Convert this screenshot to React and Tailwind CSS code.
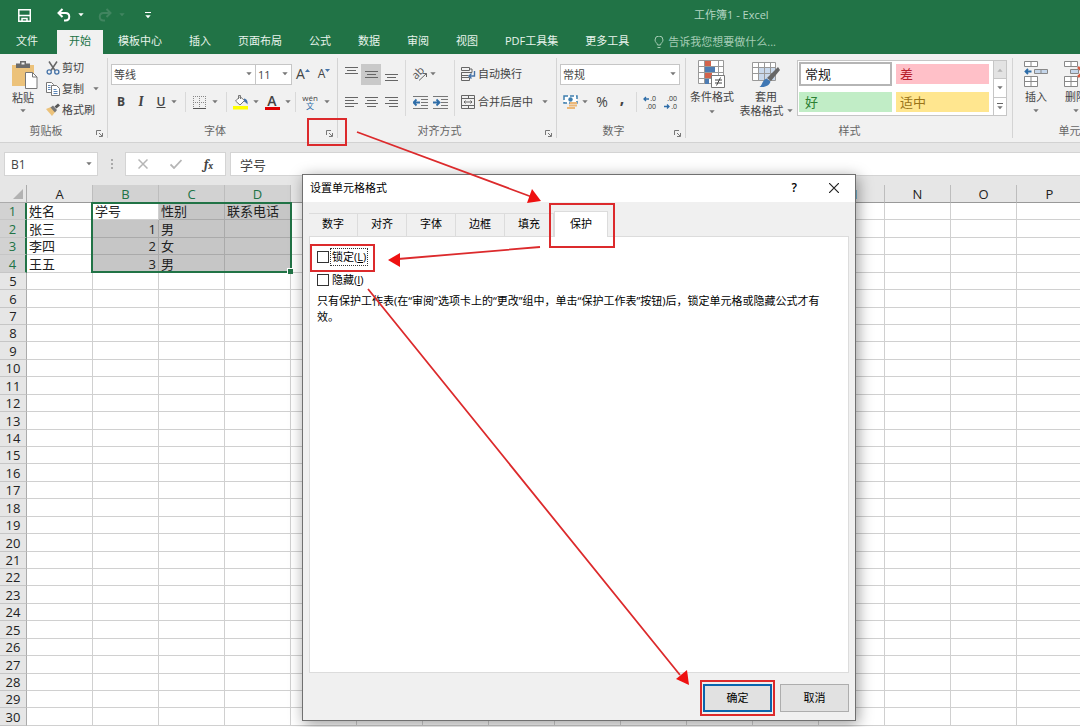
import { useState } from 'react'

const tabs = ['模板中心', '插入', '页面布局', '公式', '数据', '审阅', '视图', 'PDF工具集', '更多工具']
const columns = 'ABCDEFGHIJKLMNOPQRSTUVWXYZ'.split('')
const rowCount = 30

const data = [
  ['姓名', '学号', '性别', '联系电话'],
  ['张三', 1, '男', ''],
  ['李四', 2, '女', ''],
  ['王五', 3, '男', ''],
]

const isSelected = (row, col) => row < 4 && col >= 1 && col <= 3

/* Small shared pieces */

function Caret({ className = 'text-[#777]' }) {
  return (
    <svg className={`w-[6px] h-[4px] shrink-0 ${className}`} viewBox="0 0 6 4" fill="currentColor" aria-hidden="true">
      <path d="M.3 .3h5.400L3 3.300z" />
    </svg>
  )
}

function Launcher() {
  return (
    <button aria-label="更多设置" className="absolute right-[5px] bottom-[5px] text-[#777]">
      <svg className="w-[7px] h-[7px]" viewBox="0 0 7 7" fill="none" stroke="currentColor">
        <path d="M.5 5V.5H5" />
        <path d="M3 3l3 3" />
        <path d="M6.5 3v3.5H3" />
      </svg>
    </button>
  )
}

function Group({ label, launcher, className = '', children }) {
  return (
    <section className={`relative shrink-0 flex flex-col ${className}`}>
      <div className="h-[66px]">{children}</div>
      <div className={`h-[22px] flex items-center justify-center text-[#666] ${launcher ? 'pr-4' : ''}`}>{label}</div>
      {launcher && <Launcher />}
      <div className="absolute right-0 top-1 bottom-1 w-px bg-[#d4d4d4]" />
    </section>
  )
}

function Divider() {
  return <div className="w-px h-5 shrink-0 bg-[#d9d9d9]" />
}

function SelectBox({ label, value, className = '' }) {
  return (
    <div className={`relative h-[21px] shrink-0 ${className}`}>
      <select aria-label={label} className="w-full h-full appearance-none border border-[#c6c6c6] bg-white pl-[2px] leading-none text-[#444]">
        <option>{value}</option>
      </select>
      <div className="absolute right-[4px] top-2 pointer-events-none">
        <Caret />
      </div>
    </div>
  )
}

function Tool({ label, className = 'w-5', children }) {
  return (
    <button aria-label={label} className={`h-[21px] shrink-0 flex items-center justify-center ${className}`}>
      {children}
    </button>
  )
}

function Lines({ d }) {
  return (
    <svg className="w-[14px] h-[14px]" viewBox="0 0 14 14" stroke="#666" fill="none">
      <path d={d} />
    </svg>
  )
}

/* Ribbon icons */

function PasteIcon() {
  return (
    <svg className="ml-[3px] w-[27px] h-[28px]" viewBox="0 0 27 28">
      <path d="M1 4h22v21H1z" fill="#ecc27a" />
      <path d="M5 2.5h4V0h6v2.5h4V7H5z" fill="#6b6b6b" />
      <path d="M10.5 1.5h3v2h-3z" fill="#f0f0f0" />
      <path d="M14.5 11.5h7l4.500 4.500v11.500h-11.500z" fill="#fff" stroke="#777" />
      <path d="M21.500 11.500v4.500h4.500" fill="none" stroke="#777" />
    </svg>
  )
}

function ScissorsIcon() {
  return (
    <svg className="w-[14px] h-[14px]" viewBox="0 0 14 14" fill="none">
      <path d="M3 .5l6 9M11 .5l-6 9" stroke="#666" strokeWidth="1.500" />
      <circle cx="3.200" cy="11" r="2.100" stroke="#4472a8" strokeWidth="1.300" />
      <circle cx="10.800" cy="11" r="2.100" stroke="#4472a8" strokeWidth="1.300" />
    </svg>
  )
}

function CopyIcon() {
  return (
    <svg className="w-[14px] h-[14px]" viewBox="0 0 14 14" fill="#fff" stroke="#777">
      <path d="M.5 .5h5l2 2v8h-7z" />
      <path d="M5.500 3.500h5l3 3v7h-8z" />
      <path d="M2 3.500h2.500M2 5.500h2.500M2 7.500h2.500M7.500 7.500h3M7.500 9.500h4M7.500 11.500h4" stroke="#5b86b8" />
    </svg>
  )
}

function BrushIcon() {
  return (
    <svg className="w-[14px] h-[14px]" viewBox="0 0 14 14">
      <path d="M0 6l5-2 4.500 4.500L6 13z" fill="#ecc27a" />
      <path d="M4.500 4.500L7 2.500l4 4.500-2 2.500z" fill="#777" />
      <path d="M8.500 3.500L12 .5l2 2-3.500 3z" fill="#555" />
    </svg>
  )
}

function FillIcon() {
  return (
    <svg className="w-[17px] h-[16px]" viewBox="0 0 17 16">
      <path d="M3.500 7L8 2.500l4.500 4L8 11z" fill="#fff" stroke="#777" />
      <path d="M6.500 5V1.500h2V5" fill="none" stroke="#777" />
      <path d="M12 4.500c3 .5 4 3 3.500 6-1-1.500-2-2.500-3.500-3z" fill="#4472a8" />
      <path d="M1 12h15v3.500H1z" fill="#ffff00" />
    </svg>
  )
}

function BordersIcon() {
  return (
    <svg className="w-[13px] h-[13px]" viewBox="0 0 13 13" fill="none">
      <path d="M.5 0v12M6.500 0v12M12.500 0v12M0 .5h13M0 6.500h13" stroke="#888" strokeDasharray="1 1" />
      <path d="M0 12.500h13" stroke="#555" />
    </svg>
  )
}

function OrientationIcon() {
  return (
    <svg className="w-[16px] h-[16px] overflow-visible" viewBox="0 0 16 16">
      <text x="1" y="11" fontSize="11" fill="#555" transform="rotate(-45 6 9)">ab</text>
      <path d="M7 14.500l7.500-7M11 7.500h3.500v3.500" fill="none" stroke="#666" />
    </svg>
  )
}

function IndentIcon({ right }) {
  return (
    <svg className="w-[15px] h-[13px]" viewBox="0 0 15 13" fill="none">
      <path d="M0 .5h15M8 3.500h7M8 6.500h7M8 9.500h7M0 12.500h15" stroke="#777" />
      <path d={right ? 'M0 6.500h6M3.500 3.500l3 3-3 3' : 'M1 6.500h6M3.500 3.500l-3 3 3 3'} stroke="#2e6da8" strokeWidth="1.800" />
    </svg>
  )
}

function WrapIcon() {
  return (
    <svg className="w-[15px] h-[15px]" viewBox="0 0 15 15" fill="none" stroke="#666">
      <path d="M.5 .5h8v3h-8zM8.500 2h2.500v3.500H.5v3h7M.5 5.500v8M.5 10.500h8v3h-8" />
      <path d="M13.500 4v5h-5M10.500 6.500L8 9l2.500 2.500" stroke="#4472a8" strokeWidth="1.400" />
    </svg>
  )
}

function MergeIcon() {
  return (
    <svg className="w-[14px] h-[14px]" viewBox="0 0 14 14" fill="none" stroke="#666">
      <path d="M.5 .5h13v13H.5zM.5 3.500h13M.5 10.500h13M7.500 .5v3M7.500 10.500v3" />
      <path d="M3 7h8M4.500 5.500L3 7l1.500 1.500M9.500 5.500L11 7 9.500 8.500" />
    </svg>
  )
}

function CurrencyIcon() {
  return (
    <svg className="w-[16px] h-[15px]" viewBox="0 0 16 15">
      <path d="M1 1h13v7H1z" fill="#fff" stroke="#3f7fae" strokeWidth="1.500" strokeDasharray="4 2" />
      <circle cx="7.500" cy="4.500" r="2.200" fill="#3f7fae" />
      <path d="M7 7h7v2H7zM6 9.500h8v2H6zM4 12h8v2H4z" fill="#ecb878" />
    </svg>
  )
}

function DecimalIcon({ top, bottom, arrowTop }) {
  return (
    <svg className="w-[15px] h-[15px] overflow-visible" viewBox="0 0 15 15">
      <text x="14" y="6" fontSize="7" textAnchor="end" fill="#333">{top}</text>
      <text x="14" y="14" fontSize="7" textAnchor="end" fill="#333">{bottom}</text>
      <path
        d={arrowTop ? 'M7 4H2M4 2L2 4l2 2' : 'M1 11.500h5M4 9.500l2 2-2 2'}
        fill="none"
        stroke="#2e6da8"
        strokeWidth="1.300"
      />
    </svg>
  )
}

function ConditionalIcon() {
  return (
    <svg className="w-[28px] h-[28px]" viewBox="0 0 28 28">
      <path d="M.5 .5h25v23H.5z" fill="#fff" stroke="#999" />
      <path d="M6.500 0v24M20.500 0v24M0 6.500h26M0 12.500h26M0 18.500h26" stroke="#999" />
      <path d="M7 1h6v5H7zM7 13h7v5H7z" fill="#d4634b" />
      <path d="M7 7h10v5H7zM7 19h4v5H7z" fill="#4d7cb3" />
      <path d="M13.500 15.500h13v12h-13z" fill="#fff" stroke="#777" />
      <path d="M17 20h7M17 23h7M22.500 17.500l-4 8" stroke="#444" fill="none" />
    </svg>
  )
}

function TableFormatIcon() {
  return (
    <svg className="w-[28px] h-[28px]" viewBox="0 0 28 28">
      <path d="M.5 2.500h23v18H.5z" fill="#fff" stroke="#999" />
      <path d="M6 8h17v12H6z" fill="#c9d9ec" />
      <path d="M6.500 2v19M12.500 2v19M18.500 2v19M0 7.500h24M0 13.500h24" stroke="#999" />
      <path d="M26 7l2 3-9 11-4-3z" fill="#666" />
      <path d="M14.500 18.500l4 3c-1 4-5 6-11 5.500 3-1.500 2.500-7 7-8.500z" fill="#4078b4" />
    </svg>
  )
}

function CellsIcon({ remove }) {
  return (
    <svg className="w-[26px] h-[26px]" viewBox="0 0 26 26" fill="#fff" stroke="#888">
      <path d="M1.500 .5h13v5h-13zM8 .5v5M1.500 15.500h13v10h-13zM8 15.500v10M1.500 20.500h13" />
      {remove ? (
        <>
          <path d="M7.500 8.500h8v4h-8z" fill="#c5d6ea" />
          <path d="M15 6l10 10M25 6L15 16" stroke="#d4583e" strokeWidth="2.500" />
        </>
      ) : (
        <>
          <path d="M11.500 8.500h13v4h-13zM18 8.500v4" fill="#c5d6ea" />
          <path d="M8.500 10.500h-6M5 8l-2.500 2.500L5 13" stroke="#2e6da8" strokeWidth="1.800" fill="none" />
        </>
      )}
    </svg>
  )
}

function TitleBar() {
  return (
    <header className="bg-[#217346] text-[#e8f3ec]">
      <div className="relative h-[30px] flex items-center">
        <div className="flex items-center pl-[18px]">
          <button aria-label="保存">
            <svg className="w-[13px] h-[13px]" viewBox="0 0 13 13" fill="none" stroke="#fff" strokeWidth="1.500">
              <path d="M.8 .8h11.500v11.500H.8zM1 6.500h11" />
              <path d="M4 12V9.500h5V12" />
            </svg>
          </button>
          <button aria-label="撤消" className="ml-[26px]">
            <svg className="w-[14px] h-[14px]" viewBox="0 0 14 14" fill="none" stroke="#fff" strokeWidth="2">
              <path d="M5.500 1L1.500 5l4 4M2 5h6.500c5 0 5 7.500 0 7.500H7" />
            </svg>
          </button>
          <div className="ml-[7px]"><Caret className="text-white" /></div>
          <button aria-label="恢复" className="ml-[14px]">
            <svg className="w-[14px] h-[14px]" viewBox="0 0 14 14" fill="none" stroke="#418560" strokeWidth="2">
              <path d="M8.500 1l4 4-4 4M12 5H5.500c-5 0-5 7.500 0 7.500H7" />
            </svg>
          </button>
          <div className="ml-[7px]"><Caret className="text-[#418560]" /></div>
          <button aria-label="自定义快速访问工具栏" className="ml-5 flex flex-col items-center gap-[2px]">
            <div className="w-[6px] h-px bg-white" />
            <Caret className="text-white" />
          </button>
        </div>
        <div className="absolute left-[694px] text-[#b5d6c3]">工作簿1 - Excel</div>
      </div>
      <nav className="flex h-6 items-stretch gap-[3px] leading-[22px]">
        <button className="w-[54px] shrink-0 pb-[2px]">文件</button>
        <button className="bg-[#f1f1f1] px-3 pb-[2px] text-[#217346] shrink-0">开始</button>
        {tabs.map((tab) => (
          <button key={tab} className="px-3 pb-[2px] shrink-0">{tab}</button>
        ))}
        <button className="flex items-center gap-1 pl-[10px] text-[#a5ccb5] shrink-0">
          <svg className="w-[10px] h-[12px]" viewBox="0 0 10 12" fill="none" stroke="currentColor">
            <path d="M3.500 9C3.500 7 1 6.500 1 4a4 4 0 018 0c0 2.500-2.500 3-2.500 5zM3.500 11.500h3" />
          </svg>
          告诉我您想要做什么...
        </button>
      </nav>
    </header>
  )
}

function Ribbon() {
  return (
    <div className="flex overflow-hidden border-b border-[#d2d2d2] bg-[#f1f1f1] text-[#444]">
      <Group label="剪贴板" launcher className="w-[108px]">
        <div className="flex">
          <button className="w-[46px] shrink-0 pt-[7px] flex flex-col items-center">
            <PasteIcon />
            <span className="h-[18px] leading-[18px]">粘贴</span>
            <span className="pt-[2px]"><Caret /></span>
          </button>
          <div className="pt-[3px]">
            {[
              ['剪切', <ScissorsIcon />],
              ['复制', <CopyIcon />],
              ['格式刷', <BrushIcon />],
            ].map(([name, icon]) => (
              <button key={name} className="flex h-[21px] items-center gap-[2px] whitespace-nowrap">
                {icon}
                {name}
                {name === '复制' && <span className="pl-[7px]"><Caret /></span>}
              </button>
            ))}
          </div>
        </div>
      </Group>

      <Group label="字体" launcher className="w-[230px]">
        <div className="pt-[6px] pl-[3px]">
          <div className="flex h-7 items-center">
            <SelectBox label="字体" value="等线" className="w-[145px]" />
            <SelectBox label="字号" value="11" className="w-[37px] -ml-px" />
            <Tool label="增大字号" className="w-[22px]">
              <span className="text-sm">A</span>
              <svg className="w-[5px] h-[10px]" viewBox="0 0 5 10" fill="#4472a8"><path d="M0 3h5L2.500 0z" /></svg>
            </Tool>
            <Tool label="减小字号" className="w-5">
              <span className="text-xs">A</span>
              <svg className="w-[5px] h-[10px]" viewBox="0 0 5 10" fill="#4472a8"><path d="M0 0h5L2.500 3z" /></svg>
            </Tool>
          </div>
          <div className="flex h-7 items-center">
            <Tool label="加粗"><b className="text-xs">B</b></Tool>
            <Tool label="倾斜"><i className="font-serif text-sm font-semibold">I</i></Tool>
            <Tool label="下划线"><span className="text-xs font-semibold underline">U</span></Tool>
            <Caret />
            <div className="w-2" />
            <Divider />
            <Tool label="边框" className="w-[26px]"><BordersIcon /></Tool>
            <Caret />
            <div className="w-2" />
            <Divider />
            <Tool label="填充颜色" className="w-[26px]"><FillIcon /></Tool>
            <Caret />
            <Tool label="字体颜色" className="w-[26px]">
              <span className="flex flex-col items-center">
                <span className="text-sm leading-3 font-semibold">A</span>
                <span className="w-[15px] h-[3px] bg-[#e00000]" />
              </span>
            </Tool>
            <Caret />
            <div className="w-1" />
            <Divider />
            <Tool label="拼音" className="w-[28px]">
              <span className="flex flex-col items-center">
                <span className="text-[8px] leading-2">wén</span>
                <span className="text-[8px] leading-2 text-[#2e6da8]">文</span>
              </span>
            </Tool>
            <Caret />
          </div>
        </div>
      </Group>

      <Group label="对齐方式" launcher className="w-[219px]">
        <div className="flex pt-[6px] pl-[3px]">
          <div>
            <div className="flex h-7 items-center">
              <Tool label="顶端对齐"><Lines d="M1 .5h13M3 3.500h9M1 6.500h13" /></Tool>
              <Tool label="垂直居中" className="w-5 bg-[#c9c9c9]"><Lines d="M1 4.500h13M3 7.500h9M1 10.500h13" /></Tool>
              <Tool label="底端对齐"><Lines d="M1 7.500h13M3 10.500h9M1 13.500h13" /></Tool>
            </div>
            <div className="flex h-7 items-center">
              <Tool label="左对齐"><Lines d="M1 2.500h13M1 5.500h9M1 8.500h13M1 11.500h9" /></Tool>
              <Tool label="居中"><Lines d="M1 2.500h13M3 5.500h9M1 8.500h13M3 11.500h9" /></Tool>
              <Tool label="右对齐"><Lines d="M1 2.500h13M5 5.500h9M1 8.500h13M5 11.500h9" /></Tool>
            </div>
          </div>
          <div className="ml-1 h-14 border-x border-[#d9d9d9] w-[50px]">
            <div className="flex h-7 items-center pl-1">
              <Tool label="方向"><OrientationIcon /></Tool>
              <Caret />
            </div>
            <div className="flex h-7 items-center pl-1">
              <Tool label="减少缩进量"><IndentIcon /></Tool>
              <Tool label="增加缩进量"><IndentIcon right /></Tool>
            </div>
          </div>
          <div className="pl-[6px]">
            <button className="flex h-7 items-center gap-[2px]"><WrapIcon />自动换行</button>
            <button className="flex h-7 items-center gap-[3px]">
              <MergeIcon />合并后居中
              <span className="pl-[6px]"><Caret /></span>
            </button>
          </div>
        </div>
      </Group>

      <Group label="数字" launcher className="w-[129px]">
        <div className="pt-[6px] pl-[3px]">
          <div className="flex h-7 items-center">
            <SelectBox label="数字格式" value="常规" className="w-[120px]" />
          </div>
          <div className="flex h-7 items-center">
            <Tool label="会计数字格式" className="w-[22px]"><CurrencyIcon /></Tool>
            <Caret />
            <Tool label="百分比样式" className="w-[28px]"><span className="text-sm">%</span></Tool>
            <Tool label="千位分隔样式" className="w-3"><b className="text-base leading-none pb-2">,</b></Tool>
            <div className="w-2" />
            <Divider />
            <Tool label="增加小数位数" className="w-[24px]"><DecimalIcon top=".0" bottom=".00" arrowTop /></Tool>
            <Tool label="减少小数位数" className="w-[18px]"><DecimalIcon top=".00" bottom=".0" /></Tool>
          </div>
        </div>
      </Group>

      <Group label="样式" className="w-[327px]">
        <div className="flex pt-[6px] pl-[3px]">
          <button className="w-[46px] flex flex-col items-center">
            <ConditionalIcon />
            <span className="h-[18px] leading-[18px] whitespace-nowrap">条件格式</span>
            <span className="pt-1"><Caret /></span>
          </button>
          <button className="w-[56px] flex flex-col items-center mx-[3px]">
            <TableFormatIcon />
            <span className="h-[16px] leading-[18px]">套用</span>
            <span className="flex items-center gap-[3px] h-[13px] leading-[13px] whitespace-nowrap">表格格式<Caret /></span>
          </button>
          <div className="flex h-14 w-[210px] border border-[#c6c6c6] bg-white text-[13px]">
            <div className="grid flex-1 grid-cols-2 gap-x-1 gap-y-1 pl-px pr-1 py-px">
              <button className="border-2 border-[#b5b5b5] pl-1 text-left leading-none text-[#222]">常规</button>
              <button className="my-[2px] bg-[#ffc0c8] pl-1 text-left leading-none text-[#b8202c]">差</button>
              <button className="my-[2px] bg-[#c1edc6] pl-[6px] text-left leading-none text-[#2d8033]">好</button>
              <button className="my-[2px] bg-[#ffe68f] pl-1 text-left leading-none text-[#9a7417]">适中</button>
            </div>
            <div className="w-[13px] border-l border-[#c6c6c6] flex flex-col divide-y divide-[#c6c6c6]">
              <button aria-label="上一行" className="flex-1 flex items-center justify-center bg-[#e3e3e3]">
                <Caret className="rotate-180 text-[#b5b5b5]" />
              </button>
              <button aria-label="下一行" className="flex-1 flex items-center justify-center"><Caret /></button>
              <button aria-label="其他" className="flex-1 flex flex-col gap-[2px] items-center justify-center">
                <div className="w-[6px] h-px bg-[#666]" />
                <Caret />
              </button>
            </div>
          </div>
        </div>
      </Group>

      <Group label="单元格" className="w-[124px]">
        <div className="flex gap-1 pt-[7px] pl-[5px]">
          {['插入', '删除'].map((name) => (
            <button key={name} className="w-9 flex flex-col items-center">
              <CellsIcon remove={name === '删除'} />
              <span className="h-5 leading-5">{name}</span>
              <span className="pt-[2px]"><Caret /></span>
            </button>
          ))}
        </div>
      </Group>
    </div>
  )
}

function FormulaBar() {
  return (
    <div className="flex h-[42px] items-center bg-[#e6e6e6] pl-1 text-[#444]">
      <div className="relative h-6 w-[94px] shrink-0">
        <input aria-label="名称框" defaultValue="B1" className="w-full h-full border border-[#d4d4d4] bg-white pl-[6px] text-xs" />
        <div className="absolute right-[6px] top-[10px]"><Caret /></div>
      </div>
      <svg className="w-[27px] h-3 shrink-0" viewBox="0 0 27 12" fill="#aaa">
        <path d="M13 1h2v2h-2zM13 5h2v2h-2zM13 9h2v2h-2z" />
      </svg>
      <div className="flex h-6 w-[101px] shrink-0 items-center border border-[#d4d4d4] bg-white">
        <button aria-label="取消输入" className="flex flex-1 justify-center">
          <svg className="w-[10px] h-[10px]" viewBox="0 0 10 10" stroke="#b5b5b5" strokeWidth="1.500"><path d="M.5 .5l9 9M9.500 .5l-9 9" /></svg>
        </button>
        <button aria-label="输入" className="flex flex-1 justify-center">
          <svg className="w-[12px] h-[10px]" viewBox="0 0 12 10" fill="none" stroke="#b5b5b5" strokeWidth="1.800"><path d="M.5 5.500l3.500 3.500L11.500 1" /></svg>
        </button>
        <button aria-label="插入函数" className="flex-1 font-serif text-[13px] font-semibold italic leading-none">
          f<span className="text-[10px]">x</span>
        </button>
      </div>
      <input aria-label="编辑栏" defaultValue="学号" className="ml-1 h-6 min-w-0 flex-1 border border-r-0 border-[#d4d4d4] bg-white pl-[9px] text-[13px]" />
    </div>
  )
}

function Sheet() {
  return (
    <div className="relative min-h-0 flex-1 overflow-hidden">
      <table className="w-[1743px] table-fixed border-separate border-spacing-0 text-[13px] leading-4 text-[#222]">
        <colgroup>
          <col className="w-[27px]" />
          {columns.map((c) => <col key={c} className="w-[66px]" />)}
        </colgroup>
        <thead>
          <tr className="h-[18px]">
            <th className="border-r border-b border-[#ababab] bg-[#e6e6e6] p-0">
              <svg className="ml-auto mr-[3px] w-[10px] h-[10px]" viewBox="0 0 10 10" fill="#b2b2b2"><path d="M10 0v10H0z" /></svg>
            </th>
            {columns.map((c, i) => (
              <th
                key={c}
                className={`h-[18px] border-r border-b border-r-[#bdbdbd] border-b-[#999] p-0 font-normal ${isSelected(0, i) ? 'bg-[#d2d2d2] text-[#217346]' : 'bg-[#e6e6e6]'}`}
              >
                {c}
              </th>
            ))}
          </tr>
        </thead>
        <tbody>
          {Array.from({ length: rowCount }, (_, r) => (
            // rows alternate 17 and 18 pixels
            <tr key={r} className={(r % 7) % 2 ? 'h-[18px]' : 'h-[17px]'}>
              <th
                className={`border-b border-b-[#c6c6c6] p-0 font-normal ${r < 4 ? 'border-r-2 border-r-[#217346] bg-[#d2d2d2] text-[#217346]' : 'border-r border-r-[#ababab] bg-[#e6e6e6]'}`}
              >
                {r + 1}
              </th>
              {columns.map((c, i) => {
                const value = data[r]?.[i] ?? ''
                const shaded = isSelected(r, i) && !(r === 0 && i === 1)
                return (
                  <td
                    key={c}
                    className={`whitespace-nowrap border-r border-b px-[2px] py-0 ${shaded ? 'border-[#aaa] bg-[#c6c6c6]' : 'border-[#d0d0d0] bg-white'} ${typeof value === 'number' ? 'text-right' : ''}`}
                  >
                    {value}
                  </td>
                )
              })}
            </tr>
          ))}
        </tbody>
      </table>
      {/* selection frame B1:D4 */}
      <div className="absolute left-[91px] top-[17px] h-[71px] w-[201px] border-2 border-[#217346]">
        <div className="absolute -right-[3px] -bottom-[3px] h-[6px] w-[6px] border-t border-l border-white bg-[#217346]" />
      </div>
    </div>
  )
}

function CheckItem({ label, hotkey, checked, onChange, focused }) {
  return (
    <label className="flex h-[23px] items-center gap-px">
      <input
        type="checkbox"
        checked={checked}
        onChange={onChange}
        className="h-3 w-3 appearance-none border border-[#333] bg-white checked:bg-[#0078d7]"
      />
      <span className={`border border-dotted px-px leading-4 ${focused ? 'border-[#333]' : 'border-transparent'}`}>
        {label}(<u>{hotkey}</u>)
      </span>
    </label>
  )
}

function FormatDialog() {
  const [locked, setLocked] = useState(false)
  const [hidden, setHidden] = useState(false)

  return (
    <div
      role="dialog"
      aria-label="设置单元格格式"
      className="absolute left-[302px] top-[174px] flex h-[547px] w-[554px] flex-col border border-[#707070] bg-[#f0f0f0] text-black shadow-[2px_3px_14px_rgba(0,0,0,0.4)]"
    >
      <div className="flex h-[27px] items-center bg-white pl-[7px] pr-4 pb-px">
        <span className="flex-1">设置单元格格式</span>
        <button aria-label="帮助" className="text-xs font-semibold">?</button>
        <button aria-label="关闭" className="ml-8">
          <svg className="w-[10px] h-[10px]" viewBox="0 0 10 10" stroke="#222" strokeWidth="1.200"><path d="M0 0l10 10M10 0L0 10" /></svg>
        </button>
      </div>
      <div className="flex flex-1 flex-col px-[6px] pt-[9px] pb-2">
        <div role="tablist" className="flex h-[25px] items-end">
          {['数字', '对齐', '字体', '边框', '填充'].map((t) => (
            <button key={t} role="tab" className="h-[23px] w-[49px] border-t border-r border-[#dcdcdc] pb-[2px]">{t}</button>
          ))}
          <button role="tab" aria-selected="true" className="h-[26px] w-[54px] -mb-px z-10 border border-b-0 border-[#dcdcdc] bg-white pb-[2px]">保护</button>
        </div>
        <div className="flex-1 border border-[#dcdcdc] bg-white pl-[7px] pr-5 pt-2">
          <CheckItem label="锁定" hotkey="L" checked={locked} onChange={() => setLocked(!locked)} focused />
          <CheckItem label="隐藏" hotkey="I" checked={hidden} onChange={() => setHidden(!hidden)} />
          <p className="leading-4 pt-[2px]">
            只有保护工作表(在“审阅”选项卡上的“更改”组中，单击“保护工作表”按钮)后，锁定单元格或隐藏公式才有效。
          </p>
        </div>
        <div className="flex justify-end gap-2 pt-[11px]">
          <button className="h-7 w-[69px] border-2 border-[#0a64ad] bg-[#e1e1e1] pb-px">确定</button>
          <button className="h-7 w-[69px] border border-[#adadad] bg-[#e1e1e1] pb-px">取消</button>
        </div>
      </div>
    </div>
  )
}

// red step markers drawn over the window
function Annotations() {
  return (
    <svg className="pointer-events-none absolute left-0 top-0 z-20 w-[1080px] h-[727px]" viewBox="0 0 1080 727" fill="none" stroke="#dc2a2c" strokeWidth="2">
      <rect x="308" y="119" width="38" height="26" />
      <rect x="550" y="204" width="64" height="43" />
      <rect x="311" y="245" width="63" height="26" />
      <rect x="701" y="681" width="73" height="34" />
      <path d="M357 132l175 65M540 247l-142 12M368 289l312 386" strokeWidth="1.800" />
      <g fill="#ee1111" stroke="none">
        <path d="M541 201l-9-12-5 14z" />
        <path d="M388 260l12-7 0 14z" />
        <path d="M689 685l-2-15-11 9z" />
      </g>
    </svg>
  )
}

export default function App() {
  return (
    <div className="relative flex h-screen flex-col overflow-hidden bg-white font-['Open_Sans','Noto_Sans_CJK_SC',sans-serif] text-[11px] leading-4">
      <TitleBar />
      <Ribbon />
      <FormulaBar />
      <Sheet />
      <FormatDialog />
      <Annotations />
    </div>
  )
}
